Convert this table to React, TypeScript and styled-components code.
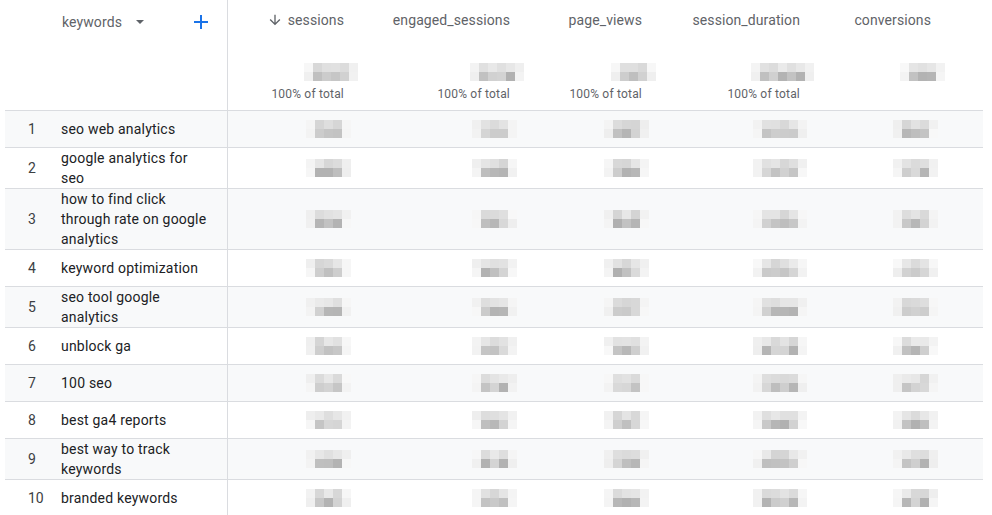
import React from 'react';
import styled, { createGlobalStyle } from 'styled-components';

const GlobalStyle = createGlobalStyle`
  *, *::before, *::after { box-sizing: border-box; }
  html, body { margin: 0; padding: 0; background: #ffffff; }
  body {
    font-family: Roboto, "Noto Sans", "Liberation Sans", Arial, sans-serif;
    color: #202124;
  }
`;

const METRIC_COLS = '132px 166px 132px 158px 131px 1fr';

const Table = styled.div`
  margin-left: 5px;
  width: 978px;
`;

const HeaderRow = styled.div`
  display: grid;
  grid-template-columns: 223px ${METRIC_COLS};
  height: 111px;
  border-bottom: 1px solid #dadce0;
`;

const DimHeader = styled.div`
  display: flex;
  align-items: flex-start;
  padding: 12px 0 0 57px;
  border-right: 1px solid #dadce0;
  color: #5f6368;
  font-size: 14px;
  line-height: 20px;
`;

const DimLabel = styled.span`
  letter-spacing: 0.1px;
`;

const DropArrow = styled.svg`
  margin: 8px 0 0 14px;
  flex: none;
`;

const AddButton = styled.svg`
  margin: 3px 0 0 50px;
  flex: none;
`;

const MetricHeader = styled.div`
  display: flex;
  flex-direction: column;
  align-items: flex-end;
  padding: 10px 16px 0 0;
`;

const MetricTitle = styled.div`
  display: flex;
  align-items: center;
  gap: 5px;
  color: #5f6368;
  font-size: 14px;
  line-height: 20px;
  letter-spacing: 0.1px;
  white-space: nowrap;
`;

const TotalBlock = styled.div`
  margin-top: 33px;
  margin-right: -7px;
`;

const TotalLabel = styled.div`
  margin-top: 5px;
  height: 16px;
  color: #5f6368;
  font-size: 12px;
  line-height: 16px;
  letter-spacing: 0.2px;
  white-space: nowrap;
`;

const Row = styled.div<{ $shaded: boolean }>`
  display: grid;
  grid-template-columns: 56px 167px ${METRIC_COLS};
  min-height: 37px;
  border-bottom: 1px solid #dadce0;
  background: ${(p) => (p.$shaded ? '#f8f9fa' : '#ffffff')};
`;

const IndexCell = styled.div`
  display: flex;
  align-items: center;
  padding-left: 23px;
  color: #3c4043;
  font-size: 14px;
  line-height: 20px;
`;

const KeywordCell = styled.div`
  display: flex;
  align-items: center;
  border-right: 1px solid #dadce0;
  font-size: 14px;
  line-height: 20px;
  letter-spacing: 0.2px;
  color: #202124;
`;

const KeywordText = styled.span`
  max-width: 152px;
`;

const ValueCell = styled.div`
  display: flex;
  align-items: center;
  justify-content: flex-end;
  padding-right: 16px;
`;

const Pixelated = styled.div<{ $cols: number }>`
  display: grid;
  grid-template-columns: repeat(${(p) => p.$cols}, 9px);
  grid-auto-rows: 9px;
  margin-right: -7px;
`;

const Pixel = styled.span<{ $g: number }>`
  background: rgb(${(p) => `${p.$g}, ${p.$g}, ${p.$g}`});
`;

function rng(seed: number) {
  let a = seed >>> 0;
  return () => {
    a = (a + 0x6d2b79f5) >>> 0;
    let t = a;
    t = Math.imul(t ^ (t >>> 15), t | 1);
    t ^= t + Math.imul(t ^ (t >>> 7), t | 61);
    return ((t ^ (t >>> 14)) >>> 0) / 4294967296;
  };
}

function Blur({ seed, cols }: { seed: number; cols: number }) {
  const r = rng(seed);
  const cells: number[] = [];
  for (let y = 0; y < 2; y++) {
    for (let x = 0; x < cols; x++) {
      const edge = x === 0 || x === cols - 1;
      let g: number;
      if (edge) g = 238 + Math.round(r() * 10);
      else if (y === 0) g = 212 + Math.round(r() * 22);
      else {
        g = 190 + Math.round(r() * 28);
        if (r() > 0.75) g = 176 + Math.round(r() * 8);
      }
      cells.push(Math.min(g, 248));
    }
  }
  return (
    <Pixelated $cols={cols}>
      {cells.map((g, i) => (
        <Pixel key={i} $g={g} />
      ))}
    </Pixelated>
  );
}

const metrics = [
  { name: 'sessions', sorted: true, total: true, cols: 5, headCols: 6 },
  { name: 'engaged_sessions', sorted: false, total: true, cols: 5, headCols: 6 },
  { name: 'page_views', sorted: false, total: true, cols: 5, headCols: 5 },
  { name: 'session_duration', sorted: false, total: true, cols: 6, headCols: 7 },
  { name: 'conversions', sorted: false, total: false, cols: 5, headCols: 5 },
];

const keywords = [
  'seo web analytics',
  'google analytics for seo',
  'how to find click through rate on google analytics',
  'keyword optimization',
  'seo tool google analytics',
  'unblock ga',
  '100 seo',
  'best ga4 reports',
  'best way to track keywords',
  'branded keywords',
];

const ArrowDown = () => (
  <svg width="16" height="16" viewBox="0 0 24 24" aria-hidden>
    <path
      fill="#5f6368"
      d="M20 12l-1.41-1.41L13 16.17V4h-2v12.17l-5.58-5.59L4 12l8 8 8-8z"
    />
  </svg>
);

export default function App() {
  return (
    <>
      <GlobalStyle />
      <Table>
        <HeaderRow>
          <DimHeader>
            <DimLabel>keywords</DimLabel>
            <DropArrow width="8" height="4" viewBox="0 0 8 4" aria-hidden>
              <path d="M0 0h8L4 4z" fill="#5f6368" />
            </DropArrow>
            <AddButton width="14" height="14" viewBox="0 0 14 14" aria-hidden>
              <path d="M7 0v14M0 7h14" stroke="#1a73e8" strokeWidth="2" />
            </AddButton>
          </DimHeader>
          {metrics.map((m, i) => (
            <MetricHeader key={m.name}>
              <MetricTitle>
                {m.sorted && <ArrowDown />}
                <span>{m.name}</span>
              </MetricTitle>
              <TotalBlock>
                <Blur seed={900 + i * 7} cols={m.headCols} />
              </TotalBlock>
              <TotalLabel>{m.total ? '100% of total' : ''}</TotalLabel>
            </MetricHeader>
          ))}
          <div />
        </HeaderRow>
        {keywords.map((kw, ri) => (
          <Row key={kw} $shaded={ri % 2 === 0}>
            <IndexCell>{ri + 1}</IndexCell>
            <KeywordCell>
              <KeywordText>{kw}</KeywordText>
            </KeywordCell>
            {metrics.map((m, ci) => (
              <ValueCell key={m.name}>
                <Blur seed={ri * 31 + ci * 5 + 3} cols={m.cols} />
              </ValueCell>
            ))}
            <div />
          </Row>
        ))}
      </Table>
    </>
  );
}
